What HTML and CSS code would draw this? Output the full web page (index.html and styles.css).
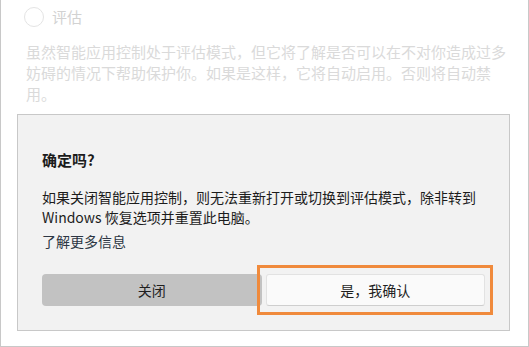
FILE: index.html
```html
<!DOCTYPE html>
<html lang="zh-CN">
<head>
  <meta charset="UTF-8" />
  <meta name="viewport" content="width=device-width, initial-scale=1.0" />
  <title>智能应用控制</title>
  <link rel="stylesheet" href="styles.css">
</head>
<body>
  <div class="frame">
    <div class="option">
      <span class="radio"></span>
      <span class="option-label">评估</span>
    </div>
    <p class="option-desc">虽然智能应用控制处于评估模式，但它将了解是否可以在不对你造成过多妨碍的情况下帮助保护你。如果是这样，它将自动启用。否则将自动禁用。</p>

    <div class="dialog">
      <h2 class="dialog-title">确定吗?</h2>
      <p class="dialog-text">如果关闭智能应用控制，则无法重新打开或切换到评估模式，除非转到 Windows 恢复选项并重置此电脑。</p>
      <a class="dialog-link" href="#">了解更多信息</a>
      <div class="actions">
        <button class="btn btn-close">关闭</button>
        <div class="confirm-wrap">
          <button class="btn btn-confirm">是，我确认</button>
          <span class="highlight"></span>
        </div>
      </div>
    </div>
  </div>
</body>
</html>
```

FILE: styles.css
```css
:root {
  --frame: #c8c8c8;
  --panel: #f2f2f2;
  --faded: #dadada;
  --text: #1c1c1c;
  --orange: #f08a3c;
}

body {
  margin: 0;
  font-family: "Noto Sans CJK SC", "Noto Sans", sans-serif;
  background: #fff;
}

.frame {
  box-sizing: border-box;
  height: 347px;
  border: 1px solid var(--frame);
  border-top: none;
  padding: 7px 18px 0 16px;
}

.option {
  display: flex;
  align-items: center;
  height: 20px;
  padding-left: 7px;
}

.radio {
  box-sizing: border-box;
  width: 20px;
  height: 20px;
  border: 1px solid #e4e4e4;
  border-radius: 50%;
}

.option-label {
  margin-left: 8px;
  font-size: 15px;
  line-height: 20px;
  color: #d2d2d2;
}

.option-desc {
  margin: 14px 0 0 9px;
  width: 482px;
  font-size: 15px;
  line-height: 21px;
  color: var(--faded);
}

.dialog {
  margin-top: 10px;
  background: var(--panel);
  border: 1px solid var(--frame);
  padding: 35px 24px 24px 24px;
}

.dialog-title {
  margin: 0;
  font-size: 15px;
  line-height: 20px;
  font-weight: 700;
  color: var(--text);
}

.dialog-text {
  margin: 17px 0 0;
  font-size: 14px;
  line-height: 20px;
  color: var(--text);
}

.dialog-link {
  display: block;
  margin-top: 4px;
  font-size: 14px;
  line-height: 20px;
  color: #2c3643;
  text-decoration: none;
}

.actions {
  display: grid;
  grid-template-columns: 1fr 1fr;
  gap: 4px;
  margin-top: 23px;
}

.btn {
  box-sizing: border-box;
  width: 100%;
  height: 32px;
  font-family: inherit;
  font-size: 14px;
  color: #1f1f1f;
  cursor: pointer;
}

.btn-close {
  background: #c2c2c2;
  border: none;
  border-radius: 4px;
}

.confirm-wrap {
  position: relative;
}

.btn-confirm {
  background: #fafafa;
  border: 1px solid #e2e2e2;
  border-bottom-color: #cecece;
  border-radius: 3px;
}

.highlight {
  position: absolute;
  top: -9px;
  right: -8px;
  bottom: -9px;
  left: -9px;
  border: 3px solid var(--orange);
  pointer-events: none;
}
```
